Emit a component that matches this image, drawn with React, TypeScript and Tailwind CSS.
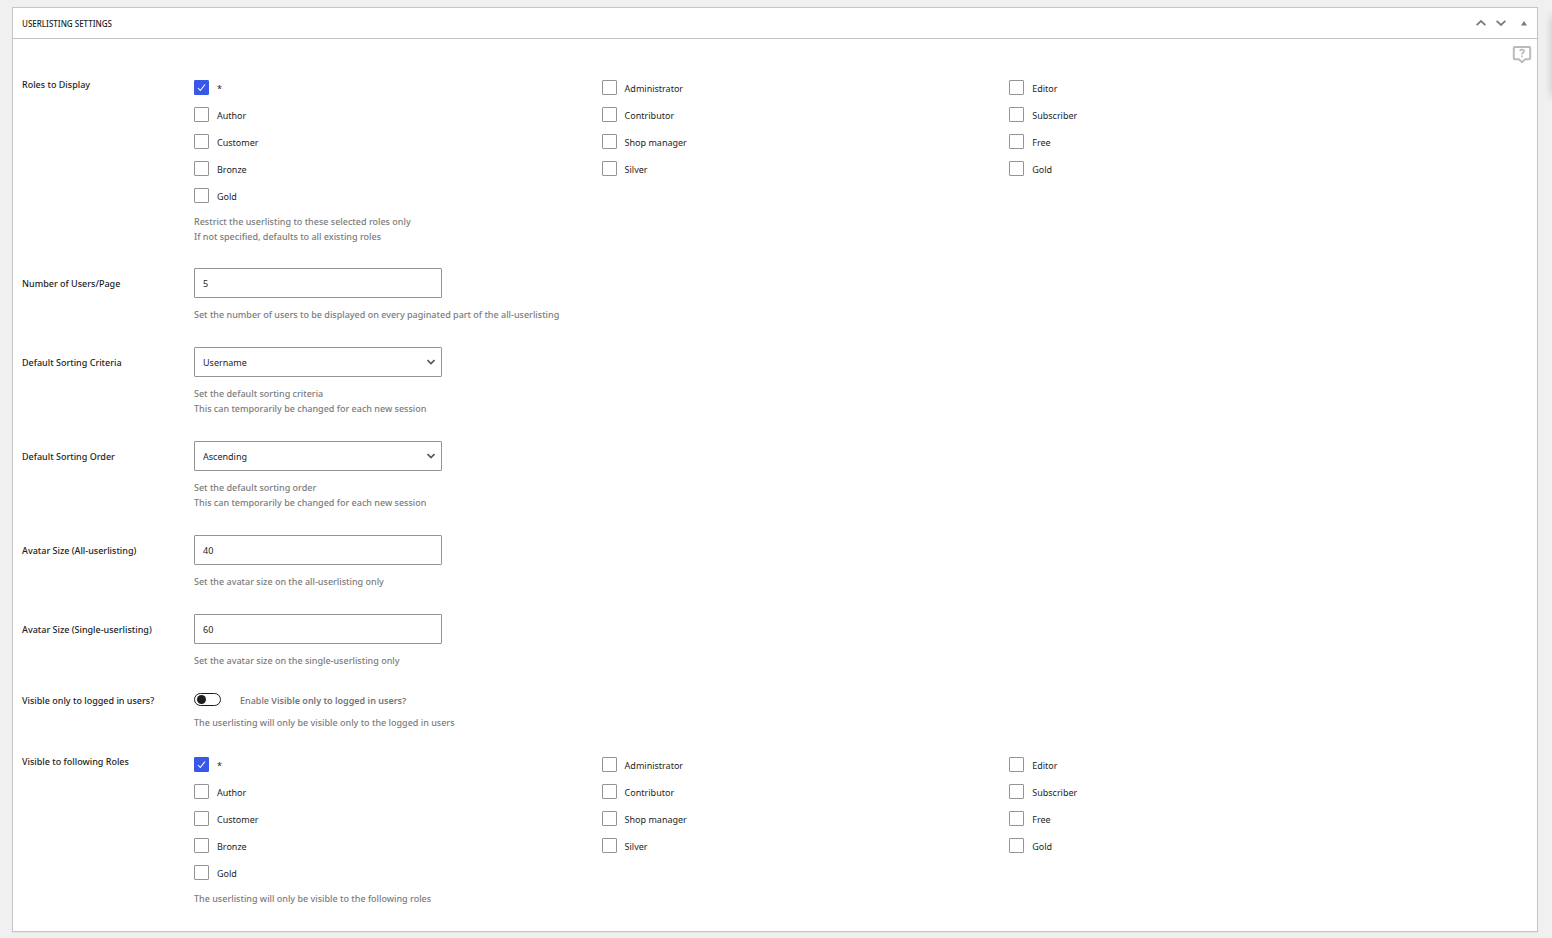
import React, { useState } from "react";

const ROLES = [
    "*",
    "Administrator",
    "Editor",
    "Author",
    "Contributor",
    "Subscriber",
    "Customer",
    "Shop manager",
    "Free",
    "Bronze",
    "Silver",
    "Gold",
    "Gold",
];

const CONTROL =
    "block h-[30px] w-[248px] rounded-[1px] border border-[#949494] bg-white px-2 pt-px text-[9px] text-[#1e1e1e] outline-none focus:border-[#3858e9]";

const Description: React.FC<{ lines: string[]; className?: string }> = ({ lines, className }) => (
    <div className={className}>
        {lines.map((line) => (
            <p key={line} className="font-medium text-[#7c7c7c]">
                {line}
            </p>
        ))}
    </div>
);

const Field: React.FC<{
    id: string;
    label: string;
    lines: string[];
    children: React.ReactNode;
}> = ({ id, label, lines, children }) => (
    <div className="flex">
        <label htmlFor={id} className="w-[172px] shrink-0 leading-[32px] font-medium">
            {label}
        </label>
        <div className="flex-1">
            {children}
            <Description lines={lines} className="mt-[9px]" />
        </div>
    </div>
);

const TextField: React.FC<{ id: string; label: string; value: string; lines: string[] }> = ({
    id,
    label,
    value,
    lines,
}) => (
    <Field id={id} label={label} lines={lines}>
        <input id={id} type="text" defaultValue={value} className={CONTROL} />
    </Field>
);

const SelectField: React.FC<{ id: string; label: string; options: string[]; lines: string[] }> = ({
    id,
    label,
    options,
    lines,
}) => (
    <Field id={id} label={label} lines={lines}>
        <div className="grid w-[248px] items-center">
            <select id={id} className={`${CONTROL} col-start-1 row-start-1 appearance-none`}>
                {options.map((option) => (
                    <option key={option}>{option}</option>
                ))}
            </select>
            <svg
                viewBox="0 0 8 6"
                className="pointer-events-none col-start-1 row-start-1 mr-[7px] h-[6px] w-[8px] justify-self-end"
                fill="none"
                stroke="#50575e"
                strokeWidth="1.6"
            >
                <path d="M0.5 1 L4 4.5 L7.5 1" />
            </svg>
        </div>
    </Field>
);

const RoleCheckbox: React.FC<{ id: string; name: string }> = ({ id, name }) => (
    <div className="flex h-[15px] items-center gap-2">
        <div className="grid size-[15px] place-items-center">
            <input
                id={id}
                type="checkbox"
                defaultChecked={name === "*"}
                className="peer col-start-1 row-start-1 size-[15px] appearance-none rounded-[1px] border border-[#949494] bg-white checked:border-[#3858e9] checked:bg-[#3858e9]"
            />
            <svg
                viewBox="0 0 9 9"
                className="pointer-events-none invisible col-start-1 row-start-1 size-[9px] peer-checked:visible"
                fill="none"
                stroke="#fff"
                strokeWidth="1.1"
            >
                <path d="M1 5 L3.3 7.5 L8 1.5" />
            </svg>
        </div>
        <label htmlFor={id} className="pt-0.5">
            {name}
        </label>
    </div>
);

const RolesField: React.FC<{ name: string; label: string; lines: string[] }> = ({ name, label, lines }) => (
    <fieldset className="flex" aria-labelledby={`${name}-label`}>
        <div id={`${name}-label`} className="w-[172px] shrink-0 font-medium">
            {label}
        </div>
        <div className="flex-1 pt-[3px]">
            <div className="grid w-11/12 grid-cols-3 gap-y-3">
                {ROLES.map((role, index) => (
                    <RoleCheckbox key={index} id={`${name}-${index}`} name={role} />
                ))}
            </div>
            <Description lines={lines} className="mt-[11px]" />
        </div>
    </fieldset>
);

const App: React.FC = () => {
    const [open, setOpen] = useState(true);

    return (
        <div className="relative min-h-screen overflow-hidden bg-[#f0f0f0] py-[7px] pr-[14px] pl-3 font-['Noto_Sans',sans-serif] text-[9px] leading-[15px] text-[#1e1e1e]">
            <section className="border border-[#c3c4c7] bg-white shadow-[0_1px_1px_rgba(0,0,0,0.04)]">
                <header className="flex h-[31px] items-center justify-between border-b border-[#c3c4c7] pr-[5px] pl-[9px]">
                    <h2 className="text-[8px] font-medium uppercase">Userlisting Settings</h2>
                    <div className="flex items-center gap-[10px] text-[#787c82]">
                        <button type="button" aria-label="Move up">
                            <svg viewBox="0 0 10 6" className="h-[6px] w-[10px]" fill="none" stroke="currentColor" strokeWidth="1.8">
                                <path d="M0.6 5.2 L5 1 L9.4 5.2" />
                            </svg>
                        </button>
                        <button type="button" aria-label="Move down">
                            <svg viewBox="0 0 10 6" className="h-[6px] w-[10px]" fill="none" stroke="currentColor" strokeWidth="1.8">
                                <path d="M0.6 0.8 L5 5 L9.4 0.8" />
                            </svg>
                        </button>
                        <button
                            type="button"
                            aria-label="Toggle panel"
                            aria-expanded={open}
                            onClick={() => setOpen(!open)}
                            className="px-[5px]"
                        >
                            <svg viewBox="0 0 6 5" className="h-[5px] w-[6px]" fill="currentColor">
                                <path d="M3 0 L6 4.6 H0 Z" />
                            </svg>
                        </button>
                    </div>
                </header>

                {open && (
                    <div className="relative flex flex-col gap-6 px-[9px] pt-[38px] pb-[25px]">
                        <button type="button" aria-label="Help" className="absolute top-[6px] right-[5px] text-[#bbb]">
                            <svg viewBox="0 0 20 20" className="size-5" fill="none" stroke="currentColor" strokeWidth="2">
                                <path d="M2.5 2 H17.5 Q18.2 2 18.2 2.8 V13.2 Q18.2 14.2 17.2 14.2 H13.2 L10 17.2 L6.8 14.2 H2.8 Q1.8 14.2 1.8 13.2 V2.8 Q1.8 2 2.5 2 Z" />
                                <path strokeWidth="1.7" d="M7.9 6.2 Q8.2 4.7 10 4.7 Q12 4.7 12 6.2 Q12 7.2 11 7.8 Q10 8.4 10 9.4 M10 10.6 V12.2" />
                            </svg>
                        </button>

                        <RolesField
                            name="roles"
                            label="Roles to Display"
                            lines={[
                                "Restrict the userlisting to these selected roles only",
                                "If not specified, defaults to all existing roles",
                            ]}
                        />

                        <div className="flex flex-col gap-[25px]">
                            <TextField
                                id="per-page"
                                label="Number of Users/Page"
                                value="5"
                                lines={["Set the number of users to be displayed on every paginated part of the all-userlisting"]}
                            />
                            <SelectField
                                id="criteria"
                                label="Default Sorting Criteria"
                                options={["Username", "Email", "Registration Date"]}
                                lines={[
                                    "Set the default sorting criteria",
                                    "This can temporarily be changed for each new session",
                                ]}
                            />
                            <SelectField
                                id="order"
                                label="Default Sorting Order"
                                options={["Ascending", "Descending"]}
                                lines={[
                                    "Set the default sorting order",
                                    "This can temporarily be changed for each new session",
                                ]}
                            />
                            <TextField
                                id="avatar-all"
                                label="Avatar Size (All-userlisting)"
                                value="40"
                                lines={["Set the avatar size on the all-userlisting only"]}
                            />
                            <TextField
                                id="avatar-single"
                                label="Avatar Size (Single-userlisting)"
                                value="60"
                                lines={["Set the avatar size on the single-userlisting only"]}
                            />
                        </div>

                        <div className="flex">
                            <div className="w-[172px] shrink-0 leading-[17px] font-medium">
                                Visible only to logged in users?
                            </div>
                            <div className="flex-1">
                                <div className="flex h-[15px] items-center">
                                    <div className="grid items-center">
                                        <input
                                            id="logged-in"
                                            type="checkbox"
                                            role="switch"
                                            className="peer col-start-1 row-start-1 h-[13px] w-[27px] appearance-none rounded-full border border-[#1e1e1e] bg-white"
                                        />
                                        <span className="pointer-events-none col-start-1 row-start-1 ml-[3px] size-[9px] rounded-full bg-[#1e1e1e] peer-checked:ml-[15px]" />
                                    </div>
                                    <label htmlFor="logged-in" className="pt-0.5 pl-[19px] font-medium text-[#757575]">
                                        Enable <span className="font-semibold">Visible only to logged in users?</span>
                                    </label>
                                </div>
                                <Description
                                    lines={["The userlisting will only be visible only to the logged in users"]}
                                    className="mt-2"
                                />
                            </div>
                        </div>

                        <RolesField
                            name="visible-roles"
                            label="Visible to following Roles"
                            lines={["The userlisting will only be visible to the following roles"]}
                        />
                    </div>
                )}
            </section>

            {/* edge of the collapsed side drawer */}
            <div className="absolute top-4 left-full h-20 w-4 shadow-[0_0_8px_rgba(0,0,0,0.2)]" />
        </div>
    );
};

export default App;
